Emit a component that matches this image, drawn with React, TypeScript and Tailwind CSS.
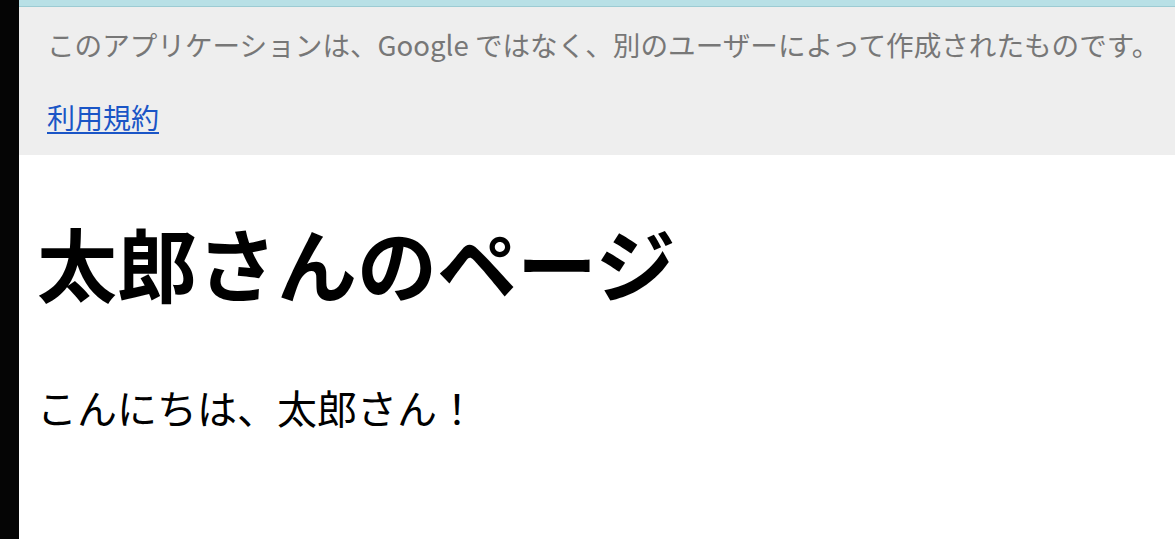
import React from "react";

export default function App() {
  const jp = { fontFamily: '"Noto Sans CJK JP", "Noto Sans", sans-serif' };
  return (
    <div className="flex h-[539px] w-full overflow-hidden bg-white" style={jp}>
      <div className="w-[19px] shrink-0 bg-[#050505]" />
      <div className="flex min-w-0 flex-1 flex-col">
        <div className="h-[7px] shrink-0 border-b border-[#9ccbd3] bg-[#b8e0e6]" />
        <div className="bg-[#eeeeee] pl-[28px] pr-[2px] pt-[18px] pb-[19px]">
          <p className="text-[27.6px] leading-[38px] text-[#777777]">
            このアプリケーションは、Google ではなく、別のユーザーによって作成されたものです。
          </p>
          <div className="mt-[35px]">
            <a href="#" className="text-[28px] leading-[38px] text-[#1a55c6] underline underline-offset-[3px]">
              利用規約
            </a>
          </div>
        </div>
        <div className="pl-[18px]">
          <h1 className="mt-[58px] text-[80px] font-bold leading-[96px] text-black">太郎さんのページ</h1>
          <p className="mt-[74px] text-[40px] leading-[48px] text-black">こんにちは、太郎さん！</p>
        </div>
      </div>
    </div>
  );
}
